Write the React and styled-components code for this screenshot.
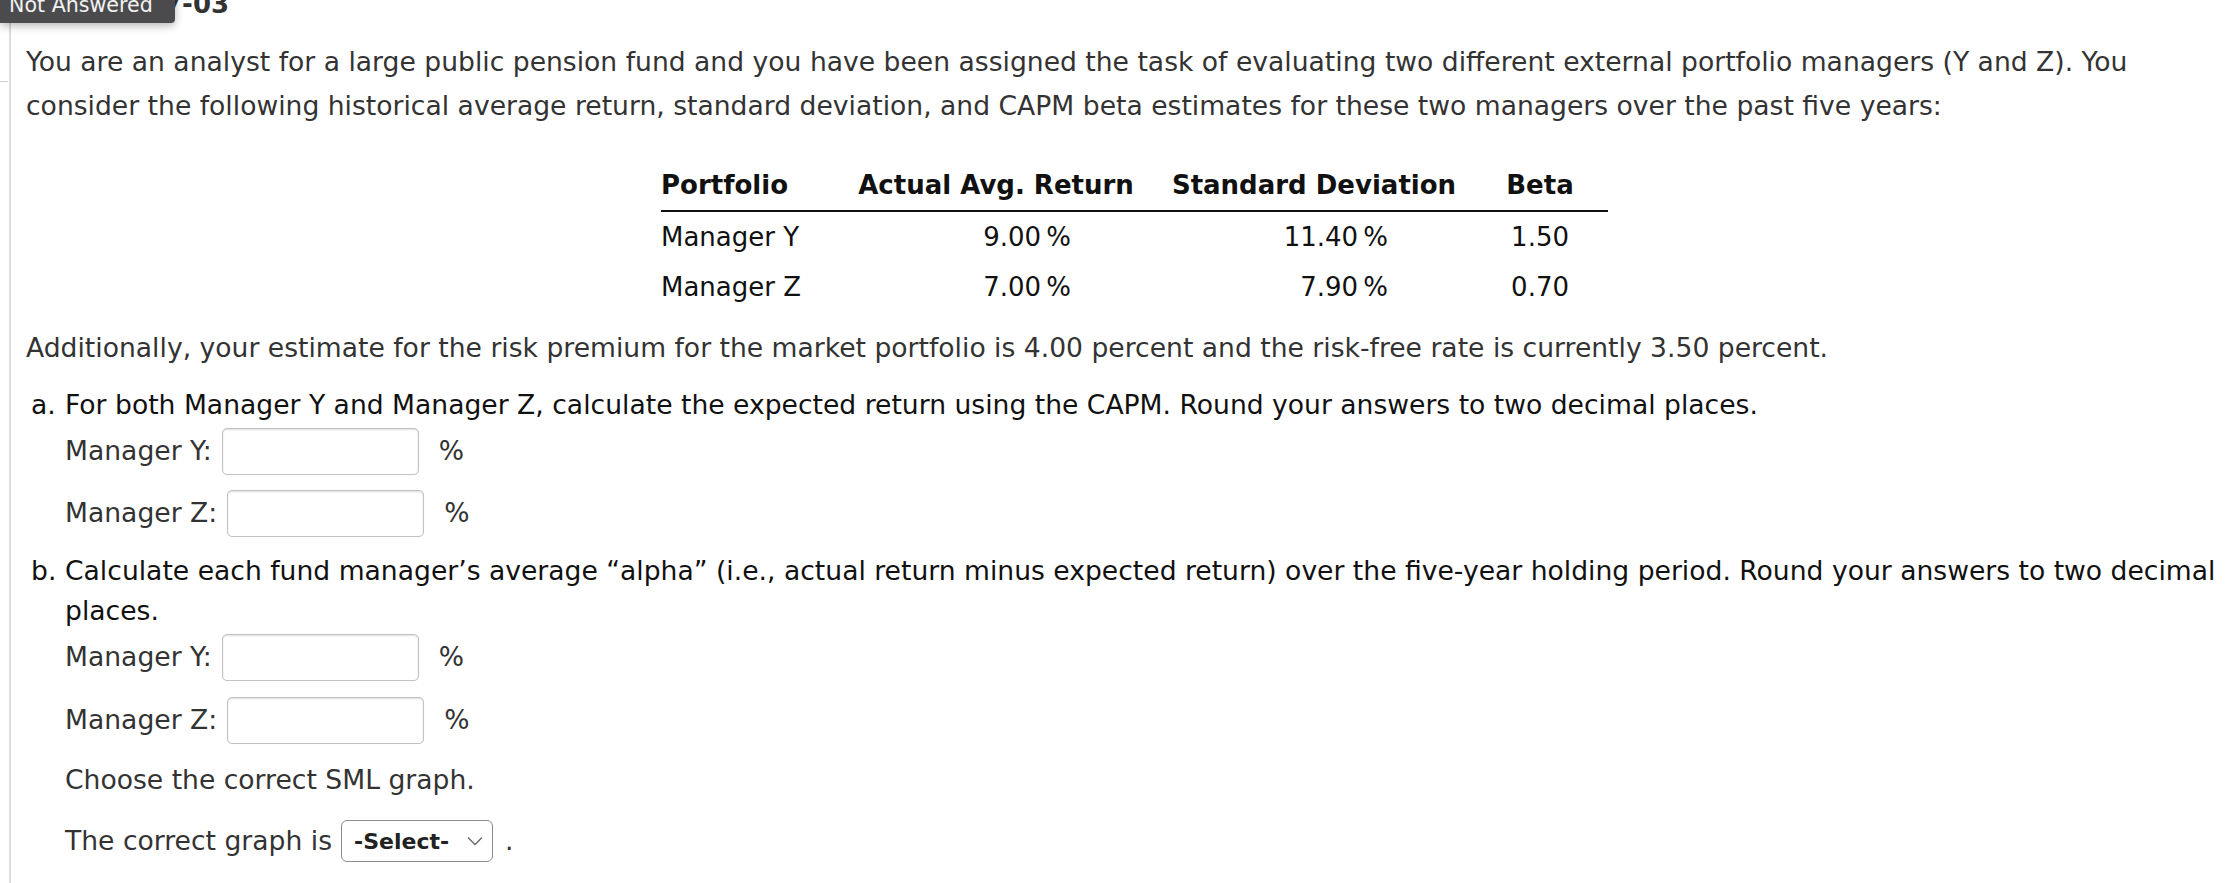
import styled, { createGlobalStyle } from "styled-components";

const GlobalStyle = createGlobalStyle`
  html, body {
    margin: 0;
    padding: 0;
    background: #fff;
  }
  body {
    font-family: "DejaVu Sans", Verdana, sans-serif;
    color: #333;
  }
`;

const Page = styled.div`
  position: relative;
  width: 2225px;
  height: 883px;
  overflow: hidden;
  padding-left: 9px;
  box-sizing: border-box;

  &::before {
    content: "";
    position: absolute;
    left: 0;
    top: 81px;
    width: 8px;
    height: 1px;
    background: #d0d0d0;
  }
`;

const StatusTip = styled.div`
  position: absolute;
  top: -11px;
  left: 0;
  padding: 4px 22px 6px 9px;
  background: #4b4b4d;
  color: #f2f2f2;
  font-size: 20.6px;
  line-height: 24px;
  border-radius: 0 0 4px 0;
  box-shadow: 0 3px 8px rgba(0, 0, 0, 0.28);
  z-index: 2;
`;

const Question = styled.div`
  display: flow-root;
  height: 100%;
  box-sizing: border-box;
  border-left: 2px solid #dcdcdc;
  padding: 0 6px 0 15px;
  font-size: 26.6px;
  line-height: 44px;
`;

const Title = styled.h2`
  margin: -9px 0 0 138px;
  font-size: 26px;
  line-height: 26px;
  font-weight: bold;
  color: #333;
`;

const Paragraph = styled.p`
  margin: ${(p) => p.$mt}px 0 0;
`;

const Table = styled.table`
  margin: 32px 0 0 635px;
  border-collapse: collapse;
  color: #111;
  font-size: 26px;
`;

const Th = styled.th`
  width: ${(p) => p.$w}px;
  padding: 10px 0;
  line-height: 30px;
  text-align: ${(p) => p.$align || "center"};
  font-weight: bold;
  border-bottom: 2px solid #111;
`;

const Td = styled.td`
  padding: 10px ${(p) => p.$pr || 0}px 10px 0;
  line-height: 30px;
  text-align: ${(p) => p.$align || "right"};
`;

const Part = styled.div`
  display: grid;
  grid-template-columns: 34px 1fr;
  margin: ${(p) => p.$mt}px 0 0 5px;
  line-height: 40px;
  color: #111;
`;

const PartBody = styled.div`
  min-width: 0;
`;

const FieldRow = styled.div`
  display: flex;
  align-items: center;
  height: ${(p) => p.$h || 46}px;
  margin-top: ${(p) => p.$mt}px;
  color: #333;
`;

const Label = styled.label`
  margin-right: 10px;
`;

const Input = styled.input`
  width: 197px;
  height: 47px;
  box-sizing: border-box;
  border: 1px solid #c2c2c2;
  border-radius: 5px;
  box-shadow: inset 0 1px 2px rgba(0, 0, 0, 0.14), 0 0 1px rgba(0, 0, 0, 0.08);
  background: #fff;
  font: inherit;
`;

const Unit = styled.span`
  margin-left: 20px;
`;

const Prompt = styled.div`
  margin-top: ${(p) => p.$mt}px;
  line-height: 44px;
  color: #333;
`;

const SelectWrap = styled.span`
  position: relative;
  display: inline-flex;
  margin-left: 9px;
`;

const Select = styled.select`
  appearance: none;
  width: 152px;
  height: 42px;
  box-sizing: border-box;
  padding: 0 34px 0 12px;
  border: 1.5px solid #8c8c8c;
  border-radius: 6px;
  background: #fff;
  color: #222;
  font-family: "DejaVu Sans", Verdana, sans-serif;
  font-size: 22px;
  font-weight: bold;
`;

const Chevron = styled.svg`
  position: absolute;
  right: 10px;
  top: 16px;
  pointer-events: none;
`;

const Period = styled.span`
  margin-left: 12px;
`;

const rows = [
  { name: "Manager Y", ret: "9.00\u2009%", sd: "11.40\u2009%", beta: "1.50" },
  { name: "Manager Z", ret: "7.00\u2009%", sd: "7.90\u2009%", beta: "0.70" },
];

function AnswerField({ label, mt }) {
  return (
    <FieldRow $mt={mt}>
      <Label>{label}</Label>
      <Input type="text" />
      <Unit>%</Unit>
    </FieldRow>
  );
}

export default function App() {
  return (
    <>
      <GlobalStyle />
      <Page>
        <StatusTip>Not Answered</StatusTip>
        <Question>
          <Title>7-03</Title>
          <Paragraph $mt={23}>
            You are an analyst for a large public pension fund and you have been
            assigned the task of evaluating two different external portfolio
            managers (Y and Z). You consider the following historical average
            return, standard deviation, and CAPM beta estimates for these two
            managers over the past five years:
          </Paragraph>

          <Table>
            <thead>
              <tr>
                <Th $w={175} $align="left">Portfolio</Th>
                <Th $w={320}>Actual Avg. Return</Th>
                <Th $w={316}>Standard Deviation</Th>
                <Th $w={136}>Beta</Th>
              </tr>
            </thead>
            <tbody>
              {rows.map((r) => (
                <tr key={r.name}>
                  <Td $align="left">{r.name}</Td>
                  <Td $pr={85}>{r.ret}</Td>
                  <Td $pr={84}>{r.sd}</Td>
                  <Td $pr={39}>{r.beta}</Td>
                </tr>
              ))}
            </tbody>
          </Table>

          <Paragraph $mt={14}>
            Additionally, your estimate for the risk premium for the market
            portfolio is 4.00 percent and the risk-free rate is currently 3.50
            percent.
          </Paragraph>

          <Part $mt={15}>
            <span>a.</span>
            <PartBody>
              For both Manager Y and Manager Z, calculate the expected return
              using the CAPM. Round your answers to two decimal places.
              <AnswerField label="Manager Y:" mt={3} />
              <AnswerField label="Manager Z:" mt={16} />
            </PartBody>
          </Part>

          <Part $mt={15}>
            <span>b.</span>
            <PartBody>
              Calculate each fund manager’s average “alpha” (i.e., actual return
              minus expected return) over the five-year holding period. Round
              your answers to two decimal places.
              <AnswerField label="Manager Y:" mt={3} />
              <AnswerField label="Manager Z:" mt={17} />
              <Prompt $mt={15}>Choose the correct SML graph.</Prompt>
              <FieldRow $mt={18} $h={42}>
                The correct graph is
                <SelectWrap>
                  <Select defaultValue="">
                    <option value="">-Select-</option>
                    <option value="A">Graph A</option>
                    <option value="B">Graph B</option>
                    <option value="C">Graph C</option>
                    <option value="D">Graph D</option>
                  </Select>
                  <Chevron width="16" height="10" viewBox="0 0 16 10">
                    <path
                      d="M1 1.5l7 7 7-7"
                      fill="none"
                      stroke="#666"
                      strokeWidth="1.3"
                    />
                  </Chevron>
                </SelectWrap>
                <Period>.</Period>
              </FieldRow>
            </PartBody>
          </Part>
        </Question>
      </Page>
    </>
  );
}
